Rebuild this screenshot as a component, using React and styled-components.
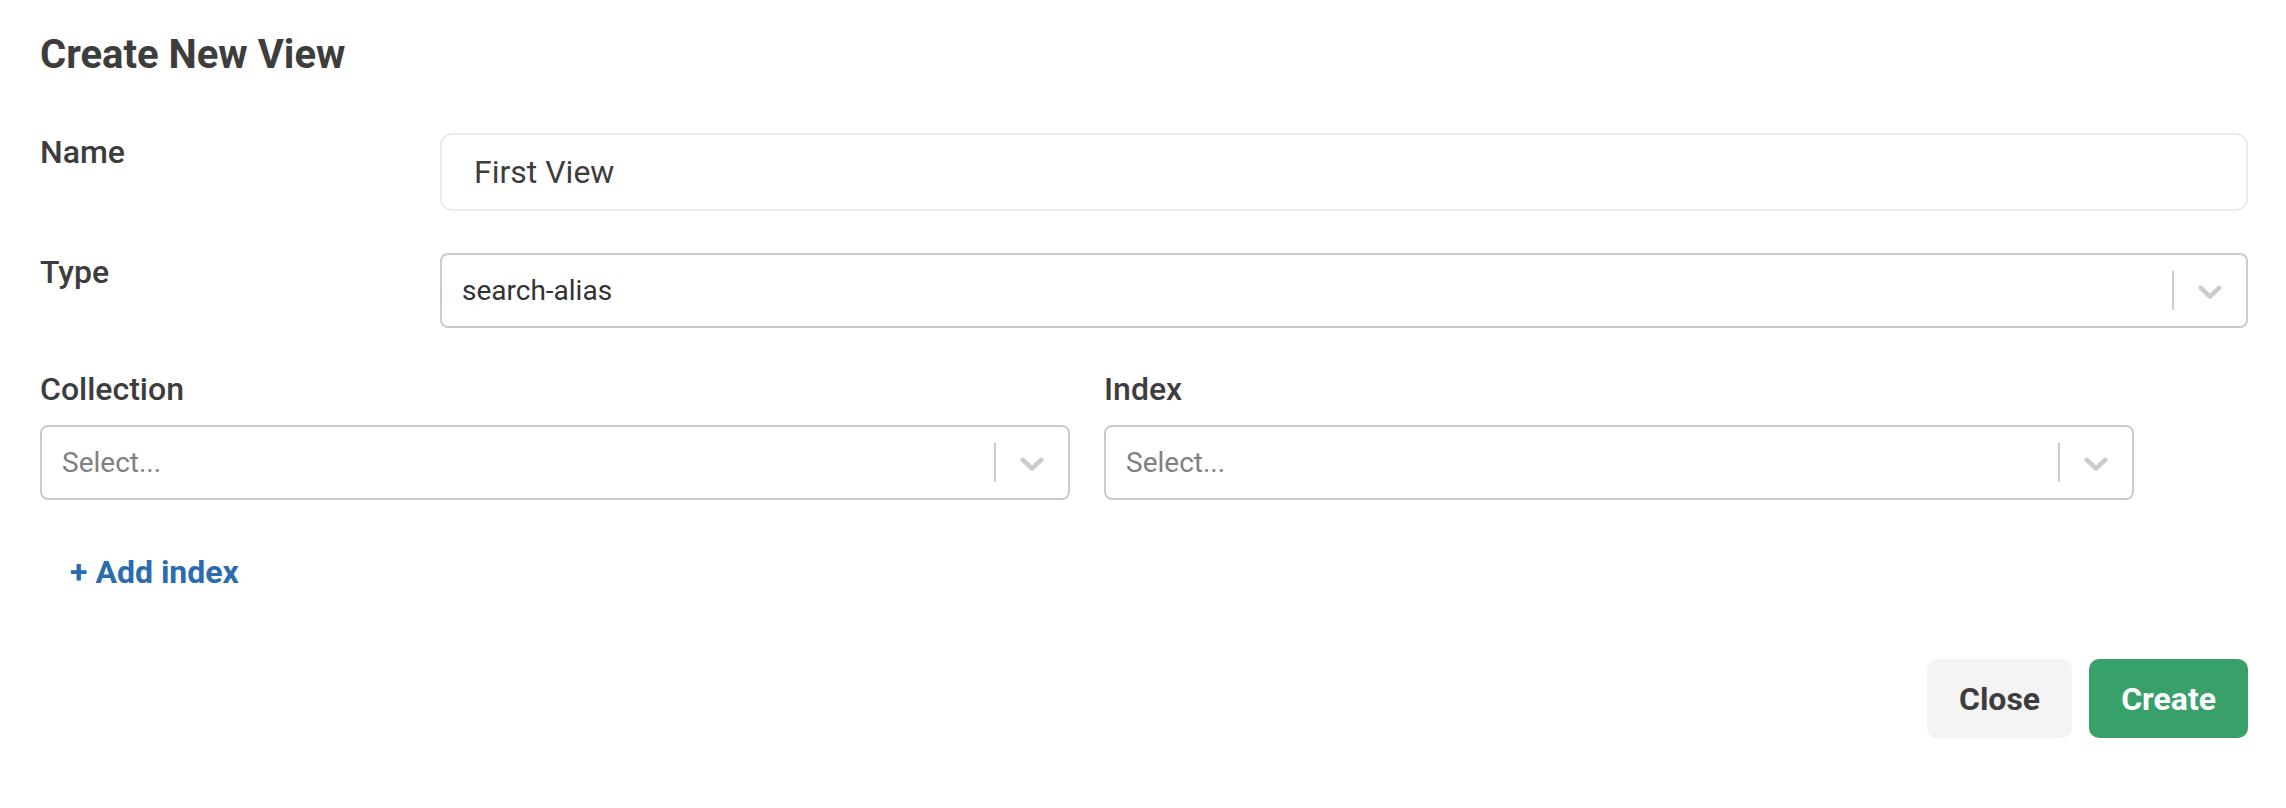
import React from 'react';
import styled, { createGlobalStyle } from 'styled-components';

const GlobalStyle = createGlobalStyle`
    html, body {
        margin: 0;
        padding: 0;
        background: #fff;
        font-family: Roboto, "Liberation Sans", sans-serif;
    }
    * {
        box-sizing: border-box;
    }
`;

const Dialog = styled.div`
    width: 2286px;
    height: 808px;
    padding: 31px 38px 0 40px;
    background: #fff;
`;

const Title = styled.h2`
    margin: 0;
    font-size: 40px;
    font-weight: 700;
    line-height: normal;
    color: #3d3d3d;
`;

const Form = styled.div`
    display: flex;
    flex-direction: column;
    gap: 42px;
    margin-top: 55px;
`;

const FieldRow = styled.div`
    display: grid;
    grid-template-columns: 400px 1fr;
    align-items: start;
`;

const IndexRow = styled.div`
    display: grid;
    grid-template-columns: 1030px 1030px 1fr;
    column-gap: 34px;
`;

const Stack = styled.div`
    display: flex;
    flex-direction: column;
    gap: 17px;
`;

const Label = styled.label`
    font-size: 32px;
    font-weight: 500;
    line-height: normal;
    color: #3d3d3d;
`;

const TextInput = styled.input`
    width: 100%;
    height: 78px;
    padding: 0 32px;
    border: 2px solid #ececec;
    border-radius: 12px;
    background: #fff;
    font-family: Roboto, "Liberation Sans", sans-serif;
    font-size: 32px;
    color: #3d3d3d;
    outline: none;
`;

const SelectBox = styled.div`
    display: flex;
    align-items: center;
    height: 75px;
    border: 2px solid #cccccc;
    border-radius: 8px;
    background: #fff;
`;

const SelectValue = styled.div`
    flex: 1;
    padding: 0 20px;
    font-size: 28px;
    color: ${({ $placeholder }) => ($placeholder ? '#808080' : '#333333')};
    white-space: nowrap;
    overflow: hidden;
`;

const Separator = styled.span`
    align-self: stretch;
    width: 2px;
    margin: 16px 0;
    background: #cccccc;
`;

const Indicator = styled.div`
    display: flex;
    padding: 16px;
    color: #cccccc;

    svg {
        width: 40px;
        height: 40px;
        fill: currentColor;
    }
`;

const AddButton = styled.button`
    align-self: flex-start;
    padding: 11px 30px 12px;
    border: none;
    background: transparent;
    font-family: Roboto, "Liberation Sans", sans-serif;
    font-size: 32px;
    font-weight: 700;
    line-height: normal;
    color: #2b6cb0;
    cursor: pointer;
`;

const Footer = styled.div`
    display: flex;
    justify-content: flex-end;
    gap: 17px;
    margin-top: 56px;
`;

const Button = styled.button`
    height: 79px;
    padding: 0 32px;
    border: none;
    border-radius: 10px;
    background: ${({ $primary }) => ($primary ? '#38a169' : '#f4f4f4')};
    color: ${({ $primary }) => ($primary ? '#ffffff' : '#3d3d3d')};
    font-family: Roboto, "Liberation Sans", sans-serif;
    font-size: 32px;
    font-weight: 700;
    cursor: pointer;
`;

const Chevron = () => (
    <svg viewBox="0 0 20 20" aria-hidden="true">
        <path d="M4.516 7.548c0.436-0.446 1.043-0.481 1.576 0l3.908 3.747 3.908-3.747c0.533-0.481 1.141-0.446 1.574 0 0.436 0.445 0.408 1.197 0 1.615-0.406 0.418-4.695 4.502-4.695 4.502-0.217 0.223-0.502 0.335-0.787 0.335s-0.57-0.112-0.789-0.335c0 0-4.287-4.084-4.695-4.502s-0.436-1.17 0-1.615z" />
    </svg>
);

const Select = ({ value, placeholder = 'Select...' }) => (
    <SelectBox>
        <SelectValue $placeholder={!value}>{value || placeholder}</SelectValue>
        <Separator />
        <Indicator>
            <Chevron />
        </Indicator>
    </SelectBox>
);

const App = () => {
    return (
        <>
            <GlobalStyle />
            <Dialog>
                <Title>Create New View</Title>
                <Form>
                    <FieldRow>
                        <Label>Name</Label>
                        <TextInput defaultValue="First View" />
                    </FieldRow>
                    <FieldRow>
                        <Label>Type</Label>
                        <Select value="search-alias" />
                    </FieldRow>
                    <IndexRow>
                        <Stack>
                            <Label>Collection</Label>
                            <Select />
                        </Stack>
                        <Stack>
                            <Label>Index</Label>
                            <Select />
                        </Stack>
                    </IndexRow>
                    <AddButton>+ Add index</AddButton>
                </Form>
                <Footer>
                    <Button>Close</Button>
                    <Button $primary>Create</Button>
                </Footer>
            </Dialog>
        </>
    );
};

export default App;
